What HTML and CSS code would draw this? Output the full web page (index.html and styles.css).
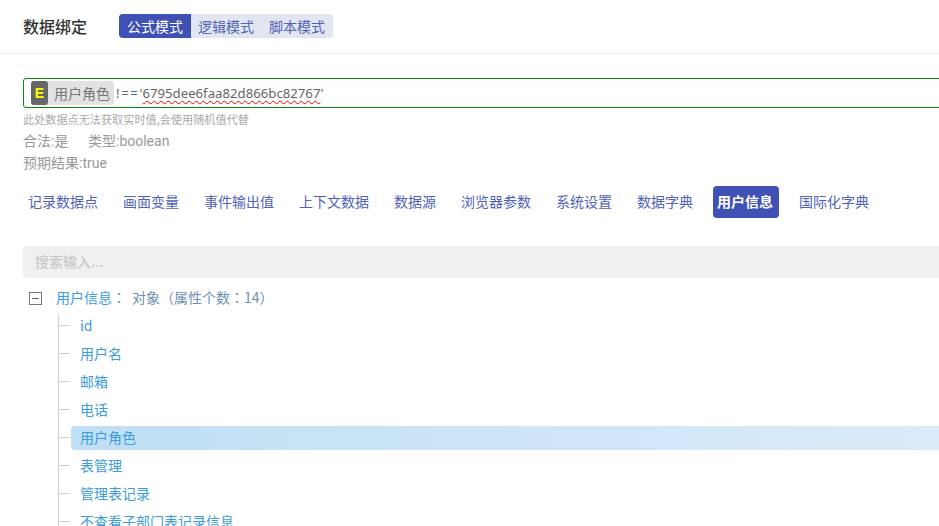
FILE: index.html
```html
<!DOCTYPE html>
<html lang="zh">
<head>
<meta charset="utf-8">
<title>数据绑定</title>
<link rel="stylesheet" href="styles.css">
</head>
<body>
<div class="page">
  <header class="head">
    <h1 class="title">数据绑定</h1>
    <div class="modes">
      <span class="mode active">公式模式</span>
      <span class="mode">逻辑模式</span>
      <span class="mode">脚本模式</span>
    </div>
  </header>
  <main class="body">
    <div class="formula">
      <span class="tag"><span class="badge">E</span><span class="tag-name">用户角色</span></span>
      <span class="op">!==</span><span class="quote">'</span><span class="err">6795dee6faa82d866bc82767</span><span class="quote">'</span>
    </div>
    <p class="hint">此处数据点无法获取实时值,会使用随机值代替</p>
    <p class="meta"><span class="meta-a">合法:是</span><span>类型:boolean</span></p>
    <p class="meta">预期结果:true</p>
    <nav class="tabs">
      <a class="tab">记录数据点</a>
      <a class="tab">画面变量</a>
      <a class="tab">事件输出值</a>
      <a class="tab">上下文数据</a>
      <a class="tab">数据源</a>
      <a class="tab">浏览器参数</a>
      <a class="tab">系统设置</a>
      <a class="tab">数据字典</a>
      <a class="tab selected">用户信息</a>
      <a class="tab">国际化字典</a>
    </nav>
    <div class="search">搜索输入...</div>
    <div class="tree">
      <div class="root">
        <span class="toggle"><span class="minus"></span></span>
        <span class="key">用户信息<span class="colon" lang="zh-TW">：</span></span>
        <span class="type">对象（属性个数<span class="colon" lang="zh-TW">：</span>14）</span>
      </div>
      <ul class="children">
        <li class="node"><span class="label">id</span></li>
        <li class="node"><span class="label">用户名</span></li>
        <li class="node"><span class="label">邮箱</span></li>
        <li class="node"><span class="label">电话</span></li>
        <li class="node current"><span class="label">用户角色</span></li>
        <li class="node"><span class="label">表管理</span></li>
        <li class="node"><span class="label">管理表记录</span></li>
        <li class="node"><span class="label">不查看子部门表记录信息</span></li>
      </ul>
    </div>
  </main>
</div>
</body>
</html>
```
FILE: styles.css
```css
* { box-sizing: border-box; }
html, body { margin: 0; padding: 0; height: 100%; overflow: hidden; background: #fff; }
body { font-family: "Noto Sans CJK SC", "Noto Sans", sans-serif; font-size: 14px; color: #333; }
.page { width: 1000px; height: 526px; overflow: hidden; }
.head { display: flex; align-items: center; height: 54px; padding: 0 0 2px 23px; border-bottom: 1px solid #eeeeee; }
.title { margin: 0 32px 0 0; font-size: 16px; font-weight: 500; line-height: 24px; color: #333; width: 64px; white-space: nowrap; }
.modes { display: flex; height: 24px; background: #e2e6f0; border-radius: 4px; overflow: hidden; }
.mode { display: block; padding: 0 8px 0 7px; line-height: 24px; font-size: 14px; color: #5062ba; }
.mode.active { background: #3f51b5; color: #fff; padding: 0 8px; }
.body { padding: 24px 0 0 23px; }
.formula { display: flex; align-items: center; height: 30px; padding-left: 7px; border: 1px solid #0a8a0a; border-radius: 3px; font-size: 13.2px; color: #666; }
.tag { display: flex; align-items: center; height: 24px; width: 83px; background: #e2e2e2; border-radius: 3px; margin-right: 2px; }
.badge { width: 17px; height: 24px; background: #666; color: #ff0; font-weight: 700; font-size: 14px; line-height: 24px; text-align: center; border-radius: 3px; font-family: "Liberation Sans", sans-serif; }
.tag-name { margin-left: 6px; color: #777; font-size: 14px; line-height: 24px; white-space: nowrap; }
.op { font-family: "Noto Sans", sans-serif; letter-spacing: 1.6px; }
.quote { font-family: "Noto Sans", sans-serif; }
.err { font-family: "Noto Sans", sans-serif; text-decoration: underline wavy #f00 1px; text-underline-offset: 2px; }
.hint { margin: 2px 0 3px; font-size: 11.15px; line-height: 18px; color: #aaa; }
.meta { margin: 2px 0 0; font-family: Roboto, "Noto Sans CJK SC", sans-serif; font-size: 14px; line-height: 20px; color: #999; }
.meta-a { display: inline-block; width: 65px; }
.tabs { display: flex; gap: 15px; margin-top: 13px; height: 32px; }
.tab { display: block; padding: 0 5px; line-height: 31px; font-size: 14px; color: #5062ba; border-radius: 4px; white-space: nowrap; }
.tab.selected { background: #3f51b5; color: #fff; font-weight: 700; padding: 0 4px; width: 66px; }
.search { margin-top: 28px; height: 32px; padding-left: 12px; line-height: 30px; background: #eff0f2; border-radius: 4px; font-size: 14px; color: #c8c8c8; font-weight: 500; }
.tree { margin-top: 6px; }
.root { display: flex; align-items: center; height: 28px; padding-left: 6px; }
.toggle { display: flex; align-items: center; justify-content: center; width: 13px; height: 13px; border: 1px solid #777; background: #fff; }
.minus { display: block; width: 7px; height: 1px; background: #666; }
.key { margin: 0 0 2px 14px; width: 76px; color: #3b9be0; font-size: 14px; white-space: nowrap; }
.type { margin-bottom: 2px; color: #6f8fb3; font-size: 14px; white-space: nowrap; }
.colon { font-family: "Noto Sans CJK TC", sans-serif; }
.children { list-style: none; margin: 2px 0 0 35px; padding: 0; border-left: 1px solid #d0d0d0; }
.node { position: relative; height: 28px; padding: 0 0 4px 12px; }
.node::before { content: ""; position: absolute; left: 0; top: 11px; width: 11px; height: 1px; background: #d0d0d0; }
.label { display: block; height: 24px; padding-left: 9px; line-height: 22px; color: #3b9be0; font-size: 14px; white-space: nowrap; border-radius: 4px 0 0 4px; }
.current .label { background: linear-gradient(90deg, #bfdff4, #dcecf9); }
```
